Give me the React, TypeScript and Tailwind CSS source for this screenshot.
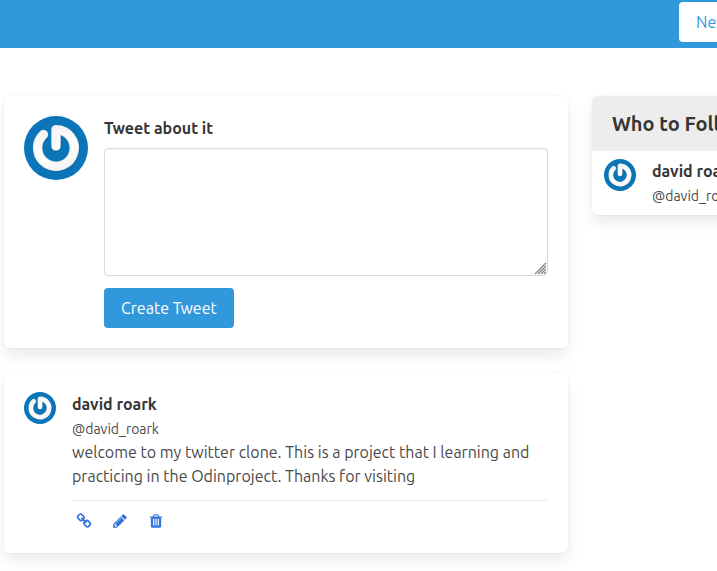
import { useId } from "react";

const CARD =
  "rounded-md bg-white shadow-[0_8px_16px_-2px_rgba(10,10,10,0.1),0_0_0_1px_rgba(10,10,10,0.02)]";

const ICONS = {
  link: "M1520 1216q0-40-28-68l-208-208q-28-28-68-28-42 0-72 32 3 3 19 18.5t21.5 21.5 15 19 13 25.5 3.5 27.5q0 40-28 68t-68 28q-15 0-27.5-3.5t-25.5-13-19-15-21.5-21.5-18.5-19q-33 31-33 73 0 40 28 68l206 207q27 27 68 27 40 0 68-26l147-146q28-28 28-67zm-703-705q0-40-28-68l-206-207q-28-28-68-28-39 0-68 27l-147 146q-28 28-28 67 0 40 28 68l208 208q27 27 68 27 42 0 72-31-3-3-19-18.5t-21.5-21.5-15-19-13-25.5-3.5-27.5q0-40 28-68t68-28q15 0 27.5 3.5t25.5 13 19 15 21.5 21.5 18.5 19q33-31 33-73zm895 705q0 120-85 203l-147 146q-83 83-203 83-121 0-204-85l-206-207q-83-83-83-203 0-123 88-209l-88-88q-86 88-208 88-120 0-204-84l-208-208q-84-84-84-204t85-203l147-146q83-83 203-83 121 0 204 85l206 207q83 83 83 203 0 123-88 209l88 88q86-88 208-88 120 0 204 84l208 208q84 84 84 204z",
  pencil:
    "M491 1536l91-91-235-235-91 91v107h128v128h107zm523-928q0-22-22-22-10 0-17 7l-542 542q-7 7-7 17 0 22 22 22 10 0 17-7l542-542q7-7 7-17zm-54-192l416 416-832 832h-416v-416zm683 96q0 53-37 90l-166 166-416-416 166-165q36-38 90-38 53 0 91 38l235 234q37 39 37 91z",
  trash:
    "M704 1376v-704q0-14-9-23t-23-9h-64q-14 0-23 9t-9 23v704q0 14 9 23t23 9h64q14 0 23-9t9-23zm256 0v-704q0-14-9-23t-23-9h-64q-14 0-23 9t-9 23v704q0 14 9 23t23 9h64q14 0 23-9t9-23zm256 0v-704q0-14-9-23t-23-9h-64q-14 0-23 9t-9 23v704q0 14 9 23t23 9h64q14 0 23-9t9-23zm-544-992h448l-48-117q-7-9-17-11h-317q-10 2-17 11zm928 32v64q0 14-9 23t-23 9h-96v948q0 83-47 143.5t-113 60.5h-832q-66 0-113-58.5t-47-141.5v-952h-96q-14 0-23-9t-9-23v-64q0-14 9-23t23-9h309l70-167q15-37 54-63t79-26h320q40 0 79 26t54 63l70 167h309q14 0 23 9t9 23z",
};

function Avatar({ className }: { className: string }) {
  const id = useId();
  const stroke = "M19.5 18.6 A18.3 18.3 0 1 0 32 13.7 V30";
  return (
    <svg viewBox="0 0 64 64" className={`shrink-0 ${className}`} role="img" aria-label="Avatar">
      <defs>
        <linearGradient id={id} gradientUnits="userSpaceOnUse" x1="20" y1="12" x2="38" y2="56">
          <stop offset="0" stopColor="#f1f1f1" />
          <stop offset="0.5" stopColor="#ffffff" />
          <stop offset="1" stopColor="#f4f4f4" />
        </linearGradient>
      </defs>
      <circle cx="32" cy="32" r="32" fill="#0a75b9" />
      <g fill="none" strokeLinecap="round" strokeLinejoin="round">
        <path d={stroke} stroke="#07598f" strokeOpacity="0.45" strokeWidth="10" transform="translate(0.5 0.7)" />
        <path d={stroke} stroke="#d3d6d8" strokeWidth="9.6" />
        <path d={stroke} stroke={`url(#${id})`} strokeWidth="8.2" />
      </g>
    </svg>
  );
}

function ResizeGrip() {
  return (
    <svg
      viewBox="0 0 14 14"
      className="pointer-events-none absolute right-px bottom-px size-[14px] bg-white"
      aria-hidden="true"
    >
      <path
        d="M2 13 L13 2 M5 13 L13 5 M8 13 L13 8 M11 13 L13 11"
        stroke="#808080"
        strokeWidth="1.2"
        fill="none"
      />
    </svg>
  );
}

function User() {
  return (
    <>
      <p className="font-bold text-[#363636]">david roark</p>
      <p className="h-6">
        <small className="text-sm leading-6">@david_roark</small>
      </p>
    </>
  );
}

function IconLink({ label, path }: { label: string; path: string }) {
  return (
    <a href="#" aria-label={label} className="flex size-6 items-center justify-center text-[#3273dc]">
      <svg viewBox="0 0 1792 1792" className="size-4" fill="currentColor" aria-hidden="true">
        <path d={path} />
      </svg>
    </a>
  );
}

export default function App() {
  return (
    <div className="min-h-screen overflow-x-hidden bg-white font-['Ubuntu','Noto_Sans',sans-serif] text-base leading-6 text-[#4a4a4a]">
      <nav className="flex h-12 justify-end bg-[#3298dc] pt-0.5">
        <div className="w-[38px]">
          <button type="button" className="h-10 rounded bg-white px-[17px] whitespace-nowrap text-[#3298dc]">
            New Tweet
          </button>
        </div>
      </nav>

      <div className="flex gap-6 pt-12 pb-4 pl-1">
        <main className="flex min-w-0 flex-1 flex-col gap-6">
          <form className={`${CARD} flex gap-4 p-5`} onSubmit={(e) => e.preventDefault()}>
            <Avatar className="size-16" />
            <div className="flex min-w-0 flex-1 flex-col items-start">
              <label htmlFor="tweet" className="mb-2 font-bold text-[#363636]">
                Tweet about it
              </label>
              <div className="relative mb-3 w-full">
                <textarea
                  id="tweet"
                  className="block h-32 w-full resize-y rounded border border-[#dbdbdb] bg-white p-2 shadow-[inset_0_1px_2px_rgba(10,10,10,0.05)] outline-none"
                />
                <ResizeGrip />
              </div>
              <button type="submit" className="h-10 rounded bg-[#3298dc] px-[17px] text-white">
                Create Tweet
              </button>
            </div>
          </form>

          <article className={`${CARD} flex gap-4 p-5`}>
            <Avatar className="size-8" />
            <div className="min-w-0 flex-1">
              <User />
              <p>
                welcome to my twitter clone. This is a project that I learning and practicing in the
                Odinproject. Thanks for visiting
              </p>
              <div className="mt-3 flex gap-3 border-t border-[#ebebeb] pt-2">
                <IconLink label="View tweet" path={ICONS.link} />
                <IconLink label="Edit tweet" path={ICONS.pencil} />
                <IconLink label="Delete tweet" path={ICONS.trash} />
              </div>
            </div>
          </article>
        </main>

        <aside className="w-[125px] shrink-0">
          <section className={`${CARD} w-64 overflow-hidden`}>
            <h2 className="bg-[#ededed] px-5 py-4 text-xl leading-[23px] font-bold text-[#363636]">
              Who to Follow
            </h2>
            <div className="flex gap-4 px-3 py-2">
              <Avatar className="size-8" />
              <div>
                <User />
              </div>
            </div>
          </section>
        </aside>
      </div>
    </div>
  );
}
